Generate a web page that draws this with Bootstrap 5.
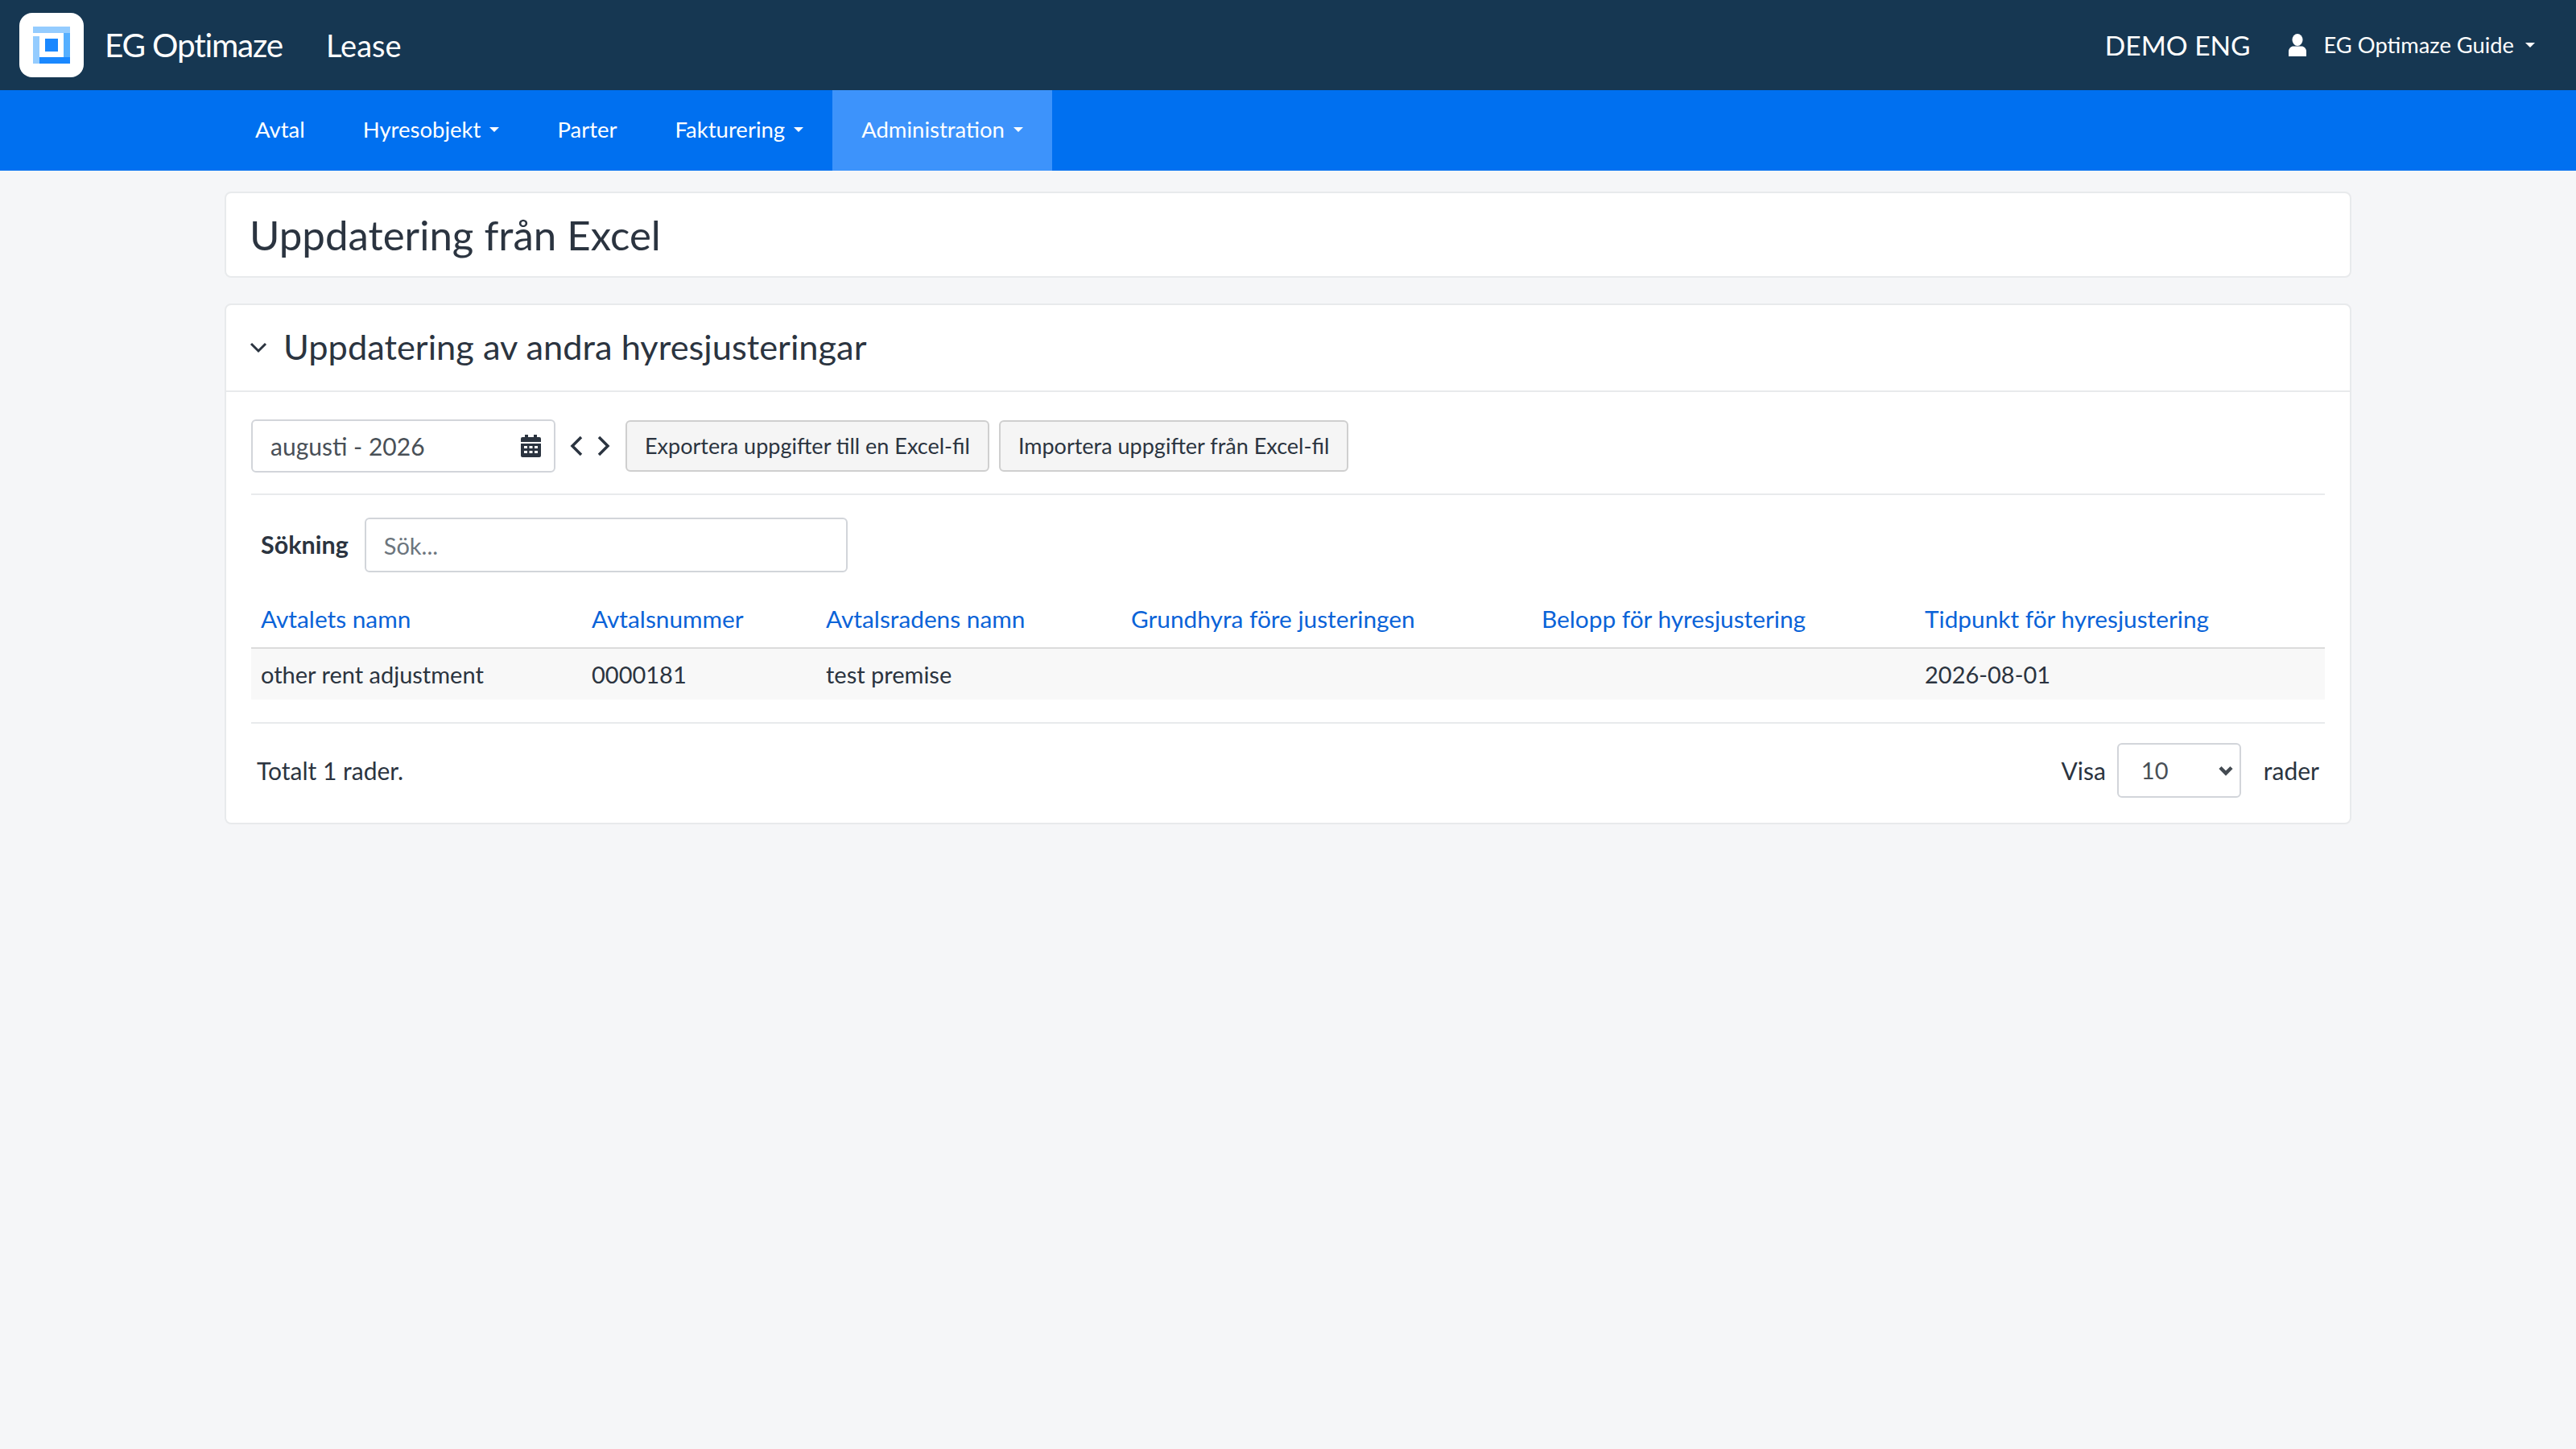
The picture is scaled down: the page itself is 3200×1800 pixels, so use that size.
<!DOCTYPE html>
<html lang="sv">
<head>
    <meta charset="UTF-8">
    <title>Uppdatering från Excel</title>
    <link rel="stylesheet" href="https://cdn.jsdelivr.net/npm/bootstrap@5.3.0/dist/css/bootstrap.min.css">
    <style>
        body {
            font-family: "Lato", "Open Sans", sans-serif;
            font-size: 29px;
            line-height: 1.5;
            background-color: #f5f6f8;
            color: #2b3440;
        }

        .top-bar {
            height: 112px;
            background-color: #163752;
            color: #fff;
            padding: 0 51px 0 24px;
        }

        .logo-box {
            width: 80px;
            height: 80px;
            background: #fff;
            border-radius: 16px;
        }

        .brand-name { font-size: 40.500px; margin-left: 26px; letter-spacing: -1.200px; }
        .app-name { font-size: 38px; margin-left: 54px; }
        .env-name { font-size: 33.500px; margin-right: 46px; }
        .user-name { font-size: 27.300px; margin-left: 21px; margin-right: 14px; }

        .caret-down {
            display: inline-block;
            border-top: 6px solid currentColor;
            border-left: 6px solid transparent;
            border-right: 6px solid transparent;
            vertical-align: middle;
        }

        .main-nav {
            height: 100px;
            background-color: #0070f0;
            padding-left: 281px;
        }

        .main-nav a {
            display: flex;
            align-items: center;
            gap: 11px;
            height: 100px;
            padding: 0 36px 2px;
            color: #fff;
            font-size: 27.500px;
            text-decoration: none;
        }

        .main-nav a.current { background-color: #3d93fb; }

        .page-wrap {
            width: 2642px;
            margin: 26px auto 0;
        }

        .panel {
            background: #fff;
            border: 2px solid #e8eaec;
            border-radius: 8px;
        }

        .title-panel { height: 107px; padding: 0 29px; margin-bottom: 32px; }
        .title-panel h1 { font-size: 51px; font-weight: 400; margin: 0; }

        .panel-head {
            height: 108px;
            padding: 0 29px;
            border-bottom: 2px solid #e8eaec;
            gap: 20px;
        }

        .panel-head h2 { font-size: 43.400px; font-weight: 400; margin: 0 0 3px; }

        .panel-body { padding: 34px 31px 31px; }

        .tool-row { padding-bottom: 26px; }

        .date-box {
            width: 378px;
            height: 66px;
            padding: 0 16px 0 22px;
            border: 2px solid #d2d5da;
            border-radius: 6px;
            font-size: 30px;
            color: #495057;
        }

        .arrows { margin: 0 19px 0 18px; gap: 18px; }

        .excel-btn {
            height: 64px;
            padding: 0 22px;
            font-size: 27px;
            color: #2b3440;
            background: #f5f5f5;
            border: 2px solid #cfcfcf;
            border-radius: 6px;
        }

        .excel-btn:last-child { margin-left: 12px; }

        .soft-rule { height: 2px; background: #e8eaec; }

        .search-row { padding: 28px 0 24px 12px; gap: 20px; }
        .search-row label { font-size: 30.500px; font-weight: 700; }

        .search-input {
            width: 600px;
            height: 68px;
            padding: 0 22px;
            font-size: 29px;
            border: 2px solid #d2d5da;
            border-radius: 6px;
            color: #495057;
        }

        .search-input::placeholder { color: #6c757d; }

        .rent-table { table-layout: fixed; width: 100%; margin: 0; }
        .rent-table th, .rent-table td { padding: 0 12px; border: 0; vertical-align: middle; }
        .rent-table th { height: 70px; font-size: 29.800px; font-weight: 400; border-bottom: 2px solid #dcdcdc; }
        .rent-table th a { color: #0a63d8; text-decoration: none; }
        .rent-table td { height: 64px; background: #f8f8f8; color: #2b3440; }
        .rent-table th:nth-child(1) { width: 411px; }
        .rent-table th:nth-child(2) { width: 291px; }
        .rent-table th:nth-child(3) { width: 379px; }
        .rent-table th:nth-child(4) { width: 510px; }
        .rent-table th:nth-child(5) { width: 476px; }

        .table-foot { margin-top: 28px; padding: 24px 7px 0; border-top: 2px solid #e8eaec; font-size: 30px; }

        .size-select {
            width: 154px;
            height: 68px;
            padding: 0 0 0 28px;
            font-size: 29px;
            color: #495057;
            border: 2px solid #d2d5da;
            border-radius: 6px;
            background-image: url("data:image/svg+xml,%3csvg xmlns='http://www.w3.org/2000/svg' viewBox='0 0 18 13'%3e%3cpath fill='none' stroke='%23444b52' stroke-width='4.500' d='M2 2.500l7 7 7-7'/%3e%3c/svg%3e");
            background-position: right 8px center;
            background-size: 18px 13px;
            margin: 0 28px 0 14px;
        }
    </style>
</head>

<body>

    <header class="top-bar d-flex align-items-center">
        <div class="logo-box d-flex align-items-center justify-content-center">
            <svg width="46" height="46" viewBox="0 0 46 46">
                <path fill="#94ccff" d="M0 0h46v8H0zM0 12h8v34H0z"/>
                <path fill="#55afff" d="M38 8h8v30h-8z"/>
                <path fill="#1a88ff" d="M8 38h38v8H8zM15 15h16v16H15z"/>
            </svg>
        </div>
        <span class="brand-name">EG Optimaze</span>
        <span class="app-name">Lease</span>
        <div class="ms-auto d-flex align-items-center">
            <span class="env-name">DEMO ENG</span>
            <svg width="24" height="28" viewBox="0 0 24 28" fill="#fff">
                <ellipse cx="12" cy="7.500" rx="6.500" ry="7.500"/>
                <path d="M1 28v-6c0-4 3-6.500 6-6.500h10c3 0 6 2.500 6 6.500v6z"/>
            </svg>
            <span class="user-name">EG Optimaze Guide</span>
            <span class="caret-down"></span>
        </div>
    </header>

    <nav class="main-nav d-flex">
        <a href="#">Avtal</a>
        <a href="#">Hyresobjekt <span class="caret-down"></span></a>
        <a href="#">Parter</a>
        <a href="#">Fakturering <span class="caret-down"></span></a>
        <a href="#" class="current">Administration <span class="caret-down"></span></a>
    </nav>

    <main class="page-wrap">
        <div class="panel title-panel d-flex align-items-center">
            <h1>Uppdatering från Excel</h1>
        </div>

        <section class="panel">
            <div class="panel-head d-flex align-items-center">
                <svg width="22" height="14" viewBox="0 0 22 14" fill="none" stroke="#2b3440" stroke-width="3">
                    <path d="M2 2l9 9 9-9"/>
                </svg>
                <h2>Uppdatering av andra hyresjusteringar</h2>
            </div>

            <div class="panel-body">
                <div class="tool-row d-flex align-items-center">
                    <div class="date-box d-flex align-items-center justify-content-between">
                        <span>augusti - 2026</span>
                        <svg width="25" height="28" viewBox="0 0 25 28" fill="#2b3440">
                            <path d="M5 0h4v3h7V0h4v3h3a2 2 0 0 1 2 2v4H0V5a2 2 0 0 1 2-2h3z"/>
                            <path fill-rule="evenodd" d="M0 11h25v15a2 2 0 0 1-2 2H2a2 2 0 0 1-2-2zM4 14v3h4v-3zM10.500 14v3h4v-3zM17 14v3h4v-3zM4 20v3h4v-3zM10.500 20v3h4v-3zM17 20v3h4v-3z"/>
                        </svg>
                    </div>
                    <div class="arrows d-flex align-items-center">
                        <svg width="16" height="26" viewBox="0 0 16 26" fill="none" stroke="#2b3440" stroke-width="3.500"><path d="M14 2L3 13l11 11"/></svg>
                        <svg width="16" height="26" viewBox="0 0 16 26" fill="none" stroke="#2b3440" stroke-width="3.500"><path d="M2 2l11 11L2 24"/></svg>
                    </div>
                    <div class="d-flex">
                        <button class="excel-btn" type="button">Exportera uppgifter till en Excel-fil</button>
                        <button class="excel-btn" type="button">Importera uppgifter från Excel-fil</button>
                    </div>
                </div>

                <div class="soft-rule"></div>

                <div class="search-row d-flex align-items-center">
                    <label for="search">Sökning</label>
                    <input id="search" class="search-input" type="text" placeholder="Sök...">
                </div>

                <table class="table rent-table">
                    <thead>
                        <tr>
                            <th><a href="#">Avtalets namn</a></th>
                            <th><a href="#">Avtalsnummer</a></th>
                            <th><a href="#">Avtalsradens namn</a></th>
                            <th><a href="#">Grundhyra före justeringen</a></th>
                            <th><a href="#">Belopp för hyresjustering</a></th>
                            <th><a href="#">Tidpunkt för hyresjustering</a></th>
                        </tr>
                    </thead>
                    <tbody>
                        <tr>
                            <td>other rent adjustment</td>
                            <td>0000181</td>
                            <td>test premise</td>
                            <td></td>
                            <td></td>
                            <td>2026-08-01</td>
                        </tr>
                    </tbody>
                </table>

                <div class="table-foot d-flex align-items-center justify-content-between">
                    <span>Totalt 1 rader.</span>
                    <div class="d-flex align-items-center">
                        <span>Visa</span>
                        <select class="form-select size-select">
                            <option>10</option>
                            <option>25</option>
                            <option>50</option>
                        </select>
                        <span>rader</span>
                    </div>
                </div>
            </div>
        </section>
    </main>

</body>
</html>
